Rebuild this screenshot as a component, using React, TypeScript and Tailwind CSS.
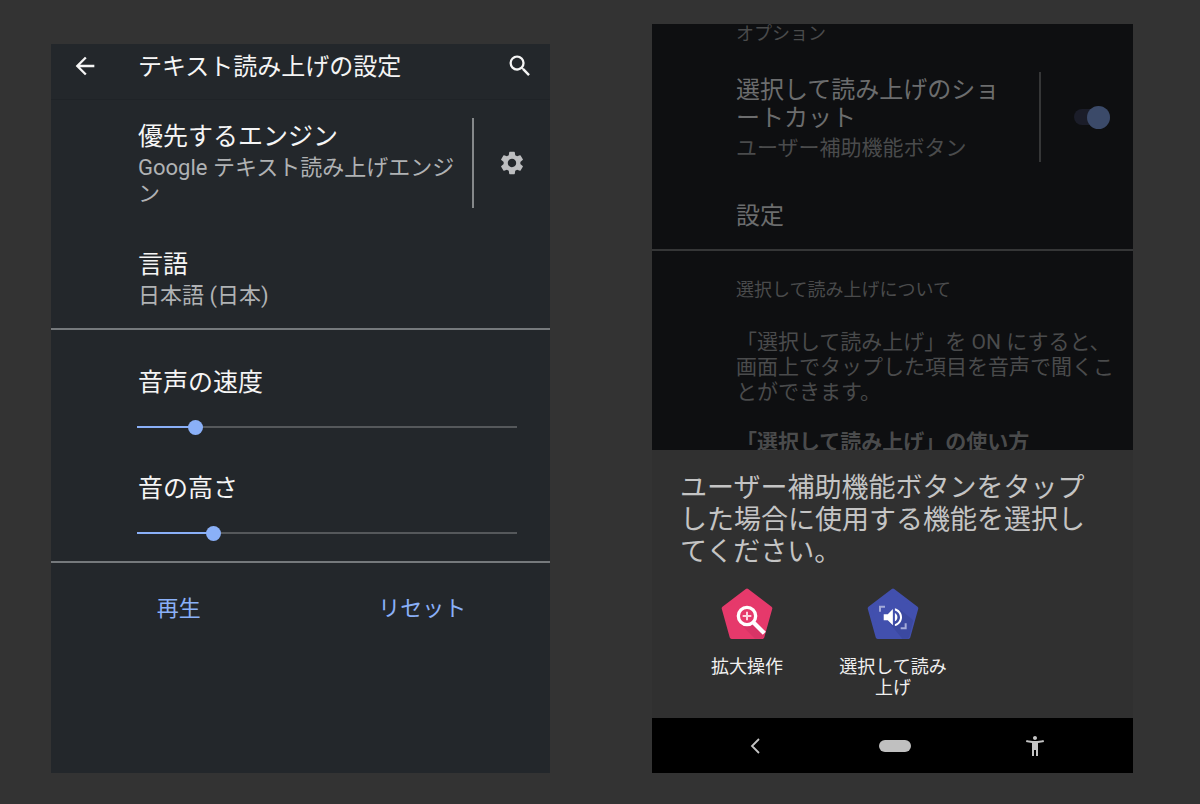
import { useState } from 'react'
import { MdAccessibilityNew, MdArrowBack, MdSearch, MdSettings } from 'react-icons/md'

const Slider = ({ id, label, start }) => {
    const [value, setValue] = useState(start);

    return (
        <div className="flex flex-col pr-[33px] pl-[86px]">
            <label htmlFor={id} className="pl-px text-[25px] leading-9">{label}</label>
            <input
                type="range"
                id={id}
                min={0}
                max={100}
                value={value}
                onChange={(e) => setValue(Number(e.target.value))}
                className="mt-[18px] h-4 w-full appearance-none bg-[length:100%_2px] bg-center bg-no-repeat [&::-webkit-slider-thumb]:size-[15px] [&::-webkit-slider-thumb]:appearance-none [&::-webkit-slider-thumb]:rounded-full [&::-webkit-slider-thumb]:bg-[#8ab0f8]"
                style={{
                    backgroundImage: `linear-gradient(to right, #8ab0f8 ${value}%, #55585b ${value}%)`,
                }}
            />
        </div>
    );
};

//pentagon shape behind the accessibility icons
const Pentagon = ({ color, children }) => (
    <svg viewBox="0 0 156 156" className="size-[52px]" aria-hidden="true">
        <path
            d="M78 8 L148 61 L124 147 H32 L8 61 Z"
            fill={color}
            stroke={color}
            strokeWidth="12"
            strokeLinejoin="round"
        />
        {children}
    </svg>
);

const MagnifyIcon = () => (
    <Pentagon color="#e6396b">
        <path d="M98 106 L56 106 L102 152 H124 L131 138 Z" fill="#b92c5c" opacity="0.3" />
        <circle cx="78" cy="84" r="26" fill="#e6396b" stroke="#fff" strokeWidth="10" />
        <path d="M78 71v26M65 84h26" stroke="#fbd3df" strokeWidth="6" />
        <path d="M96 102 L130 136" stroke="#fff" strokeWidth="13" />
    </Pentagon>
);

const SpeakIcon = () => (
    <Pentagon color="#4250ae">
        <path d="M79 111 L98 64 L139 97 L127 146 L122 152 H106 L62 99 Z" fill="#333f8f" opacity="0.4" />
        <path d="M39 71V56H54M101 121H116V106" fill="none" stroke="#a4abd9" strokeWidth="6" />
        <path
            transform="translate(41 51) scale(3.05)"
            fill="#fff"
            d="M3 9v6h4l5 5V4L7 9H3zm13.5 3c0-1.77-1.02-3.29-2.5-4.03v8.05c1.48-.73 2.5-2.25 2.5-4.02zM14 3.23v2.06c2.89.86 5 3.54 5 6.71s-2.11 5.85-5 6.71v2.06c4.01-.91 7-4.49 7-8.77s-2.99-7.86-7-8.77z"
        />
    </Pentagon>
);

const SpeechSettings = () => (
    <section className="mt-5 flex-[499] min-w-0 bg-[#23272b] text-[#f5f5f5]">
        <header className="flex h-14 items-center border-b border-[#1f2327] pr-4 pb-3 pl-5">
            <button type="button" aria-label="戻る">
                <MdArrowBack className="size-7" />
            </button>
            <h1 className="flex-1 pt-0.5 pl-[39px] text-[24px] leading-9">テキスト読み上げの設定</h1>
            <button type="button" aria-label="検索">
                <MdSearch className="size-7" />
            </button>
        </header>

        <div className="border-b-2 border-[#75797c] pt-[18px] pb-[19px]">
            <div className="flex">
                <div className="flex-1 py-px pr-4 pl-[87px]">
                    <h2 className="text-[25px] leading-9">優先するエンジン</h2>
                    <p className="text-[22px] leading-[26px] break-all text-[#b0b2b4]">
                        Google テキスト読み上げエンジン
                    </p>
                </div>
                <div className="flex w-[78px] items-center justify-center border-l-2 border-[#85888a] text-[#bdbec0]">
                    <button type="button" aria-label="エンジンの設定">
                        <MdSettings className="size-7" />
                    </button>
                </div>
            </div>
            <div className="mt-[39px] pl-[87px]">
                <h2 className="text-[25px] leading-9">言語</h2>
                <p className="text-[22px] leading-[26px] text-[#b0b2b4]">日本語 (日本)</p>
            </div>
        </div>

        <div className="flex flex-col gap-9 border-b-2 border-[#75797c] pt-[35px] pb-5">
            <Slider id="rate" label="音声の速度" start={14} />
            <Slider id="pitch" label="音の高さ" start={19} />
        </div>

        <div className="grid grid-cols-2 px-1.5 pt-7 text-[22px] leading-9 text-[#8ab0f8]">
            <button type="button" className="justify-self-center">再生</button>
            <button type="button" className="justify-self-center">リセット</button>
        </div>
    </section>
);

const SelectToSpeak = () => {
    const [enabled, setEnabled] = useState(true);

    return (
        <section className="flex flex-[481] min-w-0 flex-col">
            <div className="h-[426px] overflow-hidden bg-[#0e0f11] text-[#4a4b4c]">
                <div className="border-b-2 border-[#353637] pb-[15px]">
                    <p className="pl-[84px] text-[18px] leading-5">オプション</p>
                    <div className="mt-7 flex">
                        <label htmlFor="shortcut" className="flex-1 pt-1 pr-6 pl-[84px] break-all">
                            <span className="block text-[24px] leading-7 text-[#6c6d6e]">
                                選択して読み上げのショートカット
                            </span>
                            <span className="block text-[21px] leading-8">
                                ユーザー補助機能ボタン
                            </span>
                        </label>
                        <div className="flex h-[90px] w-[94px] items-center border-l-2 border-[#353637] pl-[33px]">
                            <input
                                type="checkbox"
                                role="switch"
                                id="shortcut"
                                checked={enabled}
                                onChange={() => setEnabled(!enabled)}
                                className="flex h-4 w-9 appearance-none items-center rounded-full bg-[#1b1d29] before:size-[23px] before:shrink-0 before:rounded-full before:bg-[#3b4a69] checked:justify-end"
                            />
                        </div>
                    </div>
                    <p className="mt-[34px] pl-[84px] text-[24px] leading-9 text-[#6c6d6e]">設定</p>
                </div>
                <div className="pt-[27px] pr-4 pl-[84px]">
                    <p className="text-[18px] leading-6">選択して読み上げについて</p>
                    <p className="mt-7 text-[21px] leading-[25px]">
                        「選択して読み上げ」を ON にすると、画面上でタップした項目を音声で聞くことができます。
                    </p>
                    <p className="mt-[25px] text-[21px] leading-[25px] font-bold">
                        「選択して読み上げ」の使い方
                    </p>
                </div>
            </div>

            <div className="bg-[#303030] pb-5 text-[#f0f0f0]">
                <h2 className="px-7 pt-[22px] text-[27px] leading-8 break-all text-[#c4c4c4]">
                    ユーザー補助機能ボタンをタップした場合に使用する機能を選択してください。
                </h2>
                <div className="mt-5 flex gap-8 pl-[38px]">
                    <button type="button" className="flex w-[114px] flex-col items-center text-[18px] leading-[21px]">
                        <MagnifyIcon />
                        <span className="mt-4">拡大操作</span>
                    </button>
                    <button type="button" className="flex w-[114px] flex-col items-center text-[18px] leading-[21px]">
                        <SpeakIcon />
                        <span className="mt-4 break-all">選択して読み上げ</span>
                    </button>
                </div>
            </div>

            <nav className="flex h-[55px] items-center justify-between bg-black pr-[74px] pl-[79px] text-[#c4c4c4]">
                <button type="button" aria-label="戻る" className="flex w-12 justify-center">
                    <svg viewBox="0 0 10 16" className="h-4 w-2.5" fill="none" stroke="currentColor" strokeWidth="1.8">
                        <path d="M9 1 L2 8 L9 15" />
                    </svg>
                </button>
                <button type="button" aria-label="ホーム" className="h-3 w-8 rounded-full bg-[#c0c0c0]" />
                <button type="button" aria-label="ユーザー補助" className="flex w-12 justify-center">
                    <MdAccessibilityNew className="size-6" />
                </button>
            </nav>
        </section>
    );
};

const App = () => {
    return (
        <main
            lang="ja"
            className="flex min-h-screen items-stretch gap-[102px] bg-[#333333] pt-6 pr-[67px] pb-[31px] pl-[51px] font-[Roboto,'Noto_Sans_CJK_JP',sans-serif]"
        >
            <SpeechSettings />
            <SelectToSpeak />
        </main>
    )
}

export default App
